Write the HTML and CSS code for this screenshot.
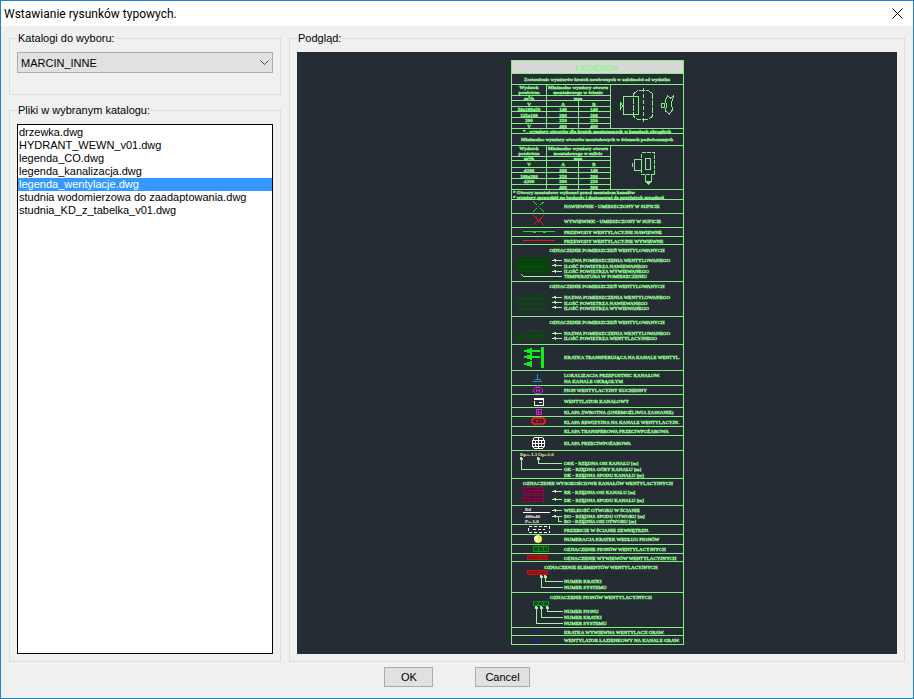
FILE: index.html
```
<!DOCTYPE html>
<html lang="pl">
<head>
  <meta charset="UTF-8" />
  <meta name="viewport" content="width=device-width, initial-scale=1.0"/>
  <title>Wstawianie rysunków typowych.</title>
  <link rel="stylesheet" href="styles.css">
</head>
<body>

  <header class="titlebar">
    <h1>Wstawianie rysunków typowych.</h1>
    <button class="close" type="button" aria-label="Zamknij">
      <svg width="11" height="11" viewBox="0 0 11 11"><path d="M.5 .5l10 10M10.5 .5l-10 10"/></svg>
    </button>
  </header>

  <main>
    <div class="sidebar">
      <fieldset class="catalogs">
        <legend><label for="catalog">Katalogi do wyboru:</label></legend>
        <div class="combo">
          <select id="catalog">
            <option>MARCIN_INNE</option>
          </select>
          <svg class="chevron" width="9" height="6" viewBox="0 0 9 6"><path d="M.5 .5l4 4 4-4"/></svg>
        </div>
      </fieldset>
      <fieldset class="files">
        <legend><label for="files">Pliki w wybranym katalogu:</label></legend>
        <select id="files" class="file-list" size="20">
          <option>drzewka.dwg</option>
          <option>HYDRANT_WEWN_v01.dwg</option>
          <option>legenda_CO.dwg</option>
          <option>legenda_kanalizacja.dwg</option>
          <option selected>legenda_wentylacje.dwg</option>
          <option>studnia wodomierzowa do zaadaptowania.dwg</option>
          <option>studnia_KD_z_tabelka_v01.dwg</option>
        </select>
      </fieldset>
    </div>

    <fieldset class="preview">
      <legend>Podgląd:</legend>
      <div class="canvas">
        <svg class="drawing" viewBox="0 0 173 585">
          <rect class="title-bg" x="0" y="0" width="173" height="13"/>

          <!-- frame and row lines -->
          <g class="line">
            <path d="M.5 .5h172v584h-172z"/>
            <path d="M0 13.5h173M0 24.5h173M0 68.5h173M0 73.5h173M0 85.5h173M0 129.5h173M0 139.5h173M0 153.5h173M0 167.5h173M0 176.5h173M0 184.5h173M0 221.5h173M0 256.5h173M0 284.5h173M0 310.5h173M0 325.5h173M0 334.5h173M0 347.5h173M0 356.5h173M0 366.5h173M0 375.5h173M0 390.5h173M0 418.5h173M0 445.5h173M0 464.5h173M0 474.5h173M0 484.5h173M0 493.5h173M0 501.5h173M0 532.5h173M0 567.5h173M0 575.5h173"/>
            <path d="M35.5 24v44M99.5 24v44M67.5 40v28M0 35.5h100M0 40.5h100M0 46.5h100M0 51.5h100M0 57.5h100M0 63.5h100"/>
            <path d="M35.5 85v44M99.5 85v44M67.5 100v29M0 96.5h100M0 100.5h100M0 107.5h100M0 112.5h100M0 118.5h100M0 124.5h100"/>
          </g>

          <!-- duct sketches -->
          <g class="line">
            <path d="M112.5 36.5h15v18h-15zM109.5 42v7l2-3z"/>
            <path stroke-dasharray="6 1" d="M122.5 34l4-3.5h11l4 3.5v22l-4 3.5h-11l-4-3.5z"/>
            <path stroke-dasharray="4 2" d="M132.5 28v36"/>
            <path d="M156.5 36l3 2 3-2-2 7 1 7-3 4-4-3 1-6-1-5zM150.5 43h3v4h-3z"/>
            <path d="M123.5 99.5h7v11h-7zM121.5 103v4M134.5 98.5h5v11h-5z"/>
            <path stroke-dasharray="4 1" d="M130.5 92.5h13v22h-13z"/>
            <path d="M134.5 115v6l3 3 3-3v-6M135 121h5M136 122h3"/>
          </g>

          <text class="title" x="86" y="11">LEGENDA</text>

          <g class="note center">
            <text x="86" y="21">Zestawienie wymiarów kratek nawiewnych w zależności od wydatku</text>
            <text x="18" y="29">Wydatek</text><text x="18" y="34">powietrza</text>
            <text x="67" y="29">Minimalne wymiary otworu</text><text x="67" y="34">montażowego w ścianie</text>
            <text x="18" y="40">m³/h</text><text x="67" y="40">mm</text>
            <text x="18" y="46">V</text><text x="52" y="46">A</text><text x="83" y="46">B</text>
            <text x="18" y="51">50x100x50</text><text x="52" y="51">140</text><text x="83" y="51">140</text>
            <text x="18" y="57">125x100</text><text x="52" y="57">200</text><text x="83" y="57">200</text>
            <text x="18" y="62">200</text><text x="52" y="62">250</text><text x="83" y="62">250</text>
            <text x="18" y="68">V</text><text x="52" y="68">400</text><text x="83" y="68">400</text>
            <text x="86" y="73">* - wymiary otworów dla kratek montowanych w kanałach okrągłych</text>
            <text x="86" y="81">Minimalne wymiary otworów montażowych w ścianach podwieszanych</text>
            <text x="18" y="90">Wydatek</text><text x="18" y="95">powietrza</text>
            <text x="67" y="90">Minimalne wymiary otworu</text><text x="67" y="95">montażowego w suficie</text>
            <text x="18" y="100">m³/h</text><text x="67" y="100">mm</text>
            <text x="18" y="106">V</text><text x="52" y="106">A</text><text x="83" y="106">B</text>
            <text x="18" y="112">d100</text><text x="52" y="112">200</text><text x="83" y="112">140</text>
            <text x="18" y="118">100x200</text><text x="52" y="118">250</text><text x="83" y="118">200</text>
            <text x="18" y="123">d200</text><text x="52" y="123">300</text><text x="83" y="123">250</text>
            <text x="52" y="129">400</text><text x="83" y="129">300</text>
          </g>
          <g class="note">
            <text x="2" y="134">* Otwory montażowe wykonać przed montażem kanałów</text>
            <text x="2" y="139">* wymiary sprawdzić na budowie i dostosować do przyjętych urządzeń</text>
          </g>

          <g class="label">
            <text x="53" y="148">NAWIEWNIK - UMIESZCZONY W SUFICIE</text>
            <text x="53" y="163">WYWIEWNIK - UMIESZCZONY W SUFICIE</text>
            <text x="53" y="174">PRZEWODY WENTYLACYJNE NAWIEWNE</text>
            <text x="53" y="183">PRZEWODY WENTYLACYJNE WYWIEWNE</text>
            <text x="53" y="202">NAZWA POMIESZCZENIA WENTYLOWANEGO</text>
            <text x="53" y="208">ILOŚĆ POWIETRZA NAWIEWANEGO</text>
            <text x="53" y="213">ILOŚĆ POWIETRZA WYWIEWANEGO</text>
            <text x="53" y="218">TEMPERATURA W POMIESZCZENIU</text>
            <text x="53" y="239">NAZWA POMIESZCZENIA WENTYLOWANEGO</text>
            <text x="53" y="245">ILOŚĆ POWIETRZA NAWIEWANEGO</text>
            <text x="53" y="250">ILOŚĆ POWIETRZA WYWIEWANEGO</text>
            <text x="53" y="275">NAZWA POMIESZCZENIA WENTYLOWANEGO</text>
            <text x="53" y="280">ILOŚĆ POWIETRZA WENTYLACYJNEGO</text>
            <text x="53" y="299">KRATKA TRANSFERUJĄCA NA KANALE WENTYL.</text>
            <text x="53" y="317">LOKALIZACJA PRZEPUSTNIC KANAŁOW.</text>
            <text x="53" y="323">NA KANALE OKRĄGŁYM</text>
            <text x="53" y="332">PION WENTYLACYJNY KUCHENNY</text>
            <text x="53" y="343">WENTYLATOR KANAŁOWY</text>
            <text x="53" y="354">KLAPA ZWROTNA (UNIEMOŻLIWIA ZASSANIE)</text>
            <text x="53" y="364">KLAPA REWIZYJNA NA KANALE WENTYLACYJN.</text>
            <text x="53" y="373">KLAPA TRANSFEROWA PRZECIWPOŻAROWA</text>
            <text x="53" y="385">KLAPA PRZECIWPOŻAROWA</text>
            <text x="53" y="405">OSK - RZĘDNA OSI KANAŁU [m]</text>
            <text x="53" y="411">GK - RZĘDNA GÓRY KANAŁU [m]</text>
            <text x="53" y="417">DK - RZĘDNA SPODU KANAŁU [m]</text>
            <text x="53" y="434">RK - RZĘDNA OSI KANAŁU [m]</text>
            <text x="53" y="442">DK - RZĘDNA SPODU KANAŁU [m]</text>
            <text x="53" y="452">WIELKOŚĆ OTWORU W ŚCIANIE</text>
            <text x="53" y="458">DO - RZĘDNA SPODU OTWORU [m]</text>
            <text x="53" y="463">RO - RZĘDNA OSI OTWORU [m]</text>
            <text x="53" y="472">PRZEBICIE W ŚCIANIE ZEWNĘTRZN.</text>
            <text x="53" y="481">NUMERACJA KRATEK WEDŁUG PIONÓW</text>
            <text x="53" y="491">OZNACZENIE PIONÓW WENTYLACYJNYCH</text>
            <text x="53" y="500">OZNACZENIE WYWIEWÓW WENTYLACYJNYCH</text>
            <text x="53" y="523">NUMER KRATKI</text>
            <text x="53" y="529">NUMER SYSTEMU</text>
            <text x="53" y="553">NUMER PIONU</text>
            <text x="53" y="559">NUMER KRATKI</text>
            <text x="53" y="565">NUMER SYSTEMU</text>
            <text x="53" y="574">KRATKA WYWIEWNA WENTYLACJI GRAW.</text>
            <text x="53" y="582">WENTYLATOR ŁAZIENKOWY NA KANALE GRAW.</text>
          </g>
          <g class="label center">
            <text x="96" y="192">OZNACZENIE POMIESZCZEŃ WENTYLOWANYCH</text>
            <text x="96" y="228">OZNACZENIE POMIESZCZEŃ WENTYLOWANYCH</text>
            <text x="96" y="264">OZNACZENIE POMIESZCZEŃ WENTYLOWANYCH</text>
            <text x="87" y="425">OZNACZENIE WYSOKOŚCIOWE KANAŁÓW WENTYLACYJNYCH</text>
            <text x="90" y="509">OZNACZENIE ELEMENTÓW WENTYLACYJNYCH</text>
            <text x="90" y="539">OZNACZENIE PIONÓW WENTYLACYJNYCH</text>
          </g>

          <!-- leaders -->
          <g class="line pale">
            <path d="M41 200.5h10M41 205.5h10M41 211.5h10M10 214.5l3 2h38"/>
            <path d="M41 237.5h10M41 242.5h10M41 247.5h10M41 273.5h10M41 278.5h10"/>
            <path d="M10.5 397v12.5h40M27.5 397v6.5h23M9 400l1-3 2 3M26 400l1-3 2 3"/>
            <path d="M41 431.5h10M41 439.5h10M41 450.5h10M41 456.5h10M47.5 457v4.5h3"/>
            <path d="M34.5 516v5.5h17M30.5 516v11.5h21M29 518l1-3 2 3M33 518l1-3 2 3"/>
            <path d="M36.5 547v4.5h15M30.5 547v10.5h21M25.5 547v16.5h26M24 549l1-3 2 3M29 549l1-3 2 3M35 549l1-3 2 3"/>
          </g>
          <g class="tip">
            <path d="M41 200l4-1v3zM41 205l4-1v3zM41 211l4-1v3zM41 237l4-1v3zM41 242l4-1v3zM41 247l4-1v3zM41 273l4-1v3zM41 278l4-1v3zM41 431l4-1v3zM41 439l4-1v3zM41 450l4-1v3zM41 456l4-1v3z"/>
          </g>

          <!-- symbols -->
          <path class="green" d="M22 141l4 4M33 142l-4 3M22 152l4-4M33 152l-4-4M27 146l1 1"/>
          <path class="red" d="M22 155l4 4M33 155l-6 7M22 165l4-4M29 161l4 4M26 160l3 1M25 157l3 6"/>
          <path class="green" d="M12 171.5h32M22 172.5h3M32 172.5h3"/>
          <path class="red" d="M12 180.5h32"/>
          <g class="dark-green">
            <path class="plate" d="M5 197h34v17H8v-3h-3z"/>
            <path class="hatch" d="M11 199.5h24M4 203.5h34M6 206.5h30M8 210.5h31"/>
            <path class="hatch" d="M14 233.5h22M5 237.5h32M4 239.5h34M6 243.5h30M5 247.5h32M12 249.5h24"/>
            <path class="hatch" d="M15 270.5h20M5 274.5h33M6 276.5h30M5 279.5h32"/>
          </g>
          <g class="bright">
            <path d="M30 287h3v21h-3zM11 291l10-3v2h8v2h-8v2zM11 297l10-3v2h8v2h-8v2zM11 304l10-3v6z"/>
          </g>
          <path class="blue-line" d="M26.5 314v6M22 321.5h9M24 319.5h6"/>
          <path class="magenta" d="M26.5 325v2M24.5 327.5h5l2 2v2l-2 2h-5l-2-2v-2zM25.5 329v3M28.5 329v3M26 330.5h2"/>
          <path class="white" d="M22.5 338.5h10v7h-9v-5M23 339.5h9M28 342.5h3M23 345.5h9"/>
          <path class="magenta" d="M25.5 349.5h5v5h-5zM27.5 350v5M26 352.5h4"/>
          <path class="red thick" d="M23 358h9l2 2v2l-2 2h-9l-2-2v-2zM25 361h2M29 361h1"/>
          <path class="white" d="M23.5 377.5h8l2 3v6l-2 2h-8l-2-2v-6zM22 380.5h11M22 386.5h11M27.5 378v11M24.5 380v6M30.5 380v6M22 383.5h11"/>
          <text class="mark cream" x="9" y="396">Dp=-1,1</text>
          <text class="mark cream" x="27" y="396">Op=1,0</text>
          <g class="wine">
            <path d="M12.5 427.5h20v6h-20zM12.5 435.5h20v6h-20z"/>
            <path d="M15 430.5h5M23 430.5h8M15 438.5h5M23 438.5h8"/>
          </g>
          <text class="mark" x="14" y="451">D4</text>
          <path class="white" d="M12 452.5h27"/>
          <text class="mark" x="14" y="458">400x40</text>
          <text class="mark" x="14" y="463">P=-1,0</text>
          <path class="white" stroke-dasharray="3 2" d="M17.5 466.5h21v6h-21zM22 469.5h12"/>
          <circle class="yellow" cx="27" cy="479" r="4"/>
          <path class="cap" d="M24 476h3v7l-4-4z"/>
          <path class="box-green" d="M22.5 486.5h15v5h-15zM27.5 487v4M32.5 487v4"/>
          <path class="box-red" d="M16.5 495.5h20v4h-20zM21 497.5h2M27 497.5h3M33 497.5h2"/>
          <path class="box-red" d="M16.5 510.5h20v4h-20zM21 512.5h2M27 512.5h3M33 512.5h2"/>
          <path class="box-green" d="M22.5 541.5h15v4h-15zM27.5 542v4M32.5 542v4"/>
          <path class="blue" d="M21 571.5h7M21 580.5h7M25 579.5h3"/>
        </svg>
      </div>
    </fieldset>
  </main>

  <footer>
    <button type="button">OK</button>
    <button type="button">Cancel</button>
  </footer>
</body>
</html>
```
FILE: styles.css
```
* {
  box-sizing: border-box;
}
body {
  margin: 0;
  height: 100vh;
  display: flex;
  flex-direction: column;
  border: 1px solid #2382c8;
  background: #f0f0f0;
  color: #000;
  font-family: 'Liberation Sans', sans-serif;
  font-size: 11px;
  line-height: 14px;
}
.titlebar {
  display: flex;
  align-items: center;
  justify-content: space-between;
  height: 25px;
  padding: 0 10px 0 3px;
  background: #fff;
}
.titlebar h1 {
  margin: 0;
  font-family: Roboto, 'Open Sans', sans-serif;
  font-size: 12px;
  font-weight: 400;
}
.close {
  display: flex;
  padding: 0;
  border: 0;
  background: none;
}
.close path {
  stroke: #000;
  fill: none;
}
main {
  flex: 1;
  min-height: 0;
  display: flex;
  gap: 8px;
  padding: 5px 8px 0;
}
.sidebar {
  width: 272px;
  display: flex;
  flex-direction: column;
  gap: 8px;
}
fieldset {
  min-width: 0;
  margin: 0;
  padding: 7px;
  border: 1px solid #dcdcdc;
}
legend {
  margin: 0;
  padding: 0 1px;
}
.catalogs {
  padding-bottom: 21px;
}
.combo {
  position: relative;
}
.combo select {
  appearance: none;
  display: block;
  width: 100%;
  height: 21px;
  padding: 0 3px;
  border: 1px solid #adadad;
  border-radius: 0;
  background: #e1e1e1;
  color: #000;
  font: inherit;
}
.chevron {
  position: absolute;
  right: 4px;
  top: 8px;
  pointer-events: none;
}
.chevron path {
  stroke: #444;
  fill: none;
}
.files,
.preview {
  flex: 1;
  min-height: 0;
  display: flex;
}
.file-list {
  flex: 1;
  width: 100%;
  padding: 1px 0;
  border: 1px solid #000;
  border-radius: 0;
  background: #fff;
  color: #000;
  font: inherit;
  outline: none;
}
.file-list option {
  min-height: 13px;
  padding: 0 1px;
  line-height: 13px;
}
.file-list option:checked {
  background: #3399ff linear-gradient(#3399ff, #3399ff);
  color: #fff !important;
}
.canvas {
  flex: 1;
  min-width: 0;
  display: flex;
  justify-content: center;
  padding: 8px 8px 9px 9px;
  background: #262c34;
}
.drawing {
  height: 100%;
  max-width: 100%;
}
footer {
  display: flex;
  justify-content: center;
  gap: 42px;
  padding: 5px 0 11px;
}
footer button {
  min-width: 49px;
  height: 20px;
  padding: 0 9px;
  border: 1px solid #adadad;
  border-radius: 0;
  background: #e1e1e1;
  color: #000;
  font: inherit;
}

/* preview drawing */
.drawing path {
  fill: none;
  shape-rendering: crispEdges;
}
.drawing .title-bg {
  fill: #d8d8d8;
}
.drawing text {
  fill: #90f590;
  font-family: 'Liberation Serif', serif;
  font-size: 5px;
  font-weight: 700;
}
.note text,
.label text {
  stroke: #90f590;
  stroke-width: .3;
}
.drawing .label text {
  font-weight: 400;
  stroke-width: .4;
}
.drawing .title {
  font-family: 'Liberation Sans', sans-serif;
  font-size: 9px;
  text-anchor: middle;
}
.drawing .center text {
  text-anchor: middle;
}
.drawing .mark { fill: #fff; }
.drawing .cream { fill: #f5e6a0; }
.line path { stroke: #80f080; }
.pale path { stroke: #a8f0a8; }
.drawing .tip path { fill: #a8f0a8; }
.green { stroke: #20d830; }
.red { stroke: #e01818; }
.thick { stroke-width: 2; }
.drawing .dark-green .plate { fill: #0a400e; }
.hatch {
  stroke: #084c0c;
  stroke-width: 2;
  stroke-dasharray: 5 1 2 2;
}
.drawing .bright path { fill: #10f018; }
.blue-line { stroke: #2890c8; }
.magenta { stroke: #d020d0; }
.white { stroke: #fff; }
.drawing .wine path {
  fill: #5c0c38;
  stroke: #8c0848;
}
.yellow { fill: #f0f040; }
.drawing .cap { fill: #fff; }
.drawing .box-green {
  fill: #104c1c;
  stroke: #108c18;
}
.drawing .box-red {
  fill: #801418;
  stroke: #d01010;
}
.blue { stroke: #1010c8; }
```
